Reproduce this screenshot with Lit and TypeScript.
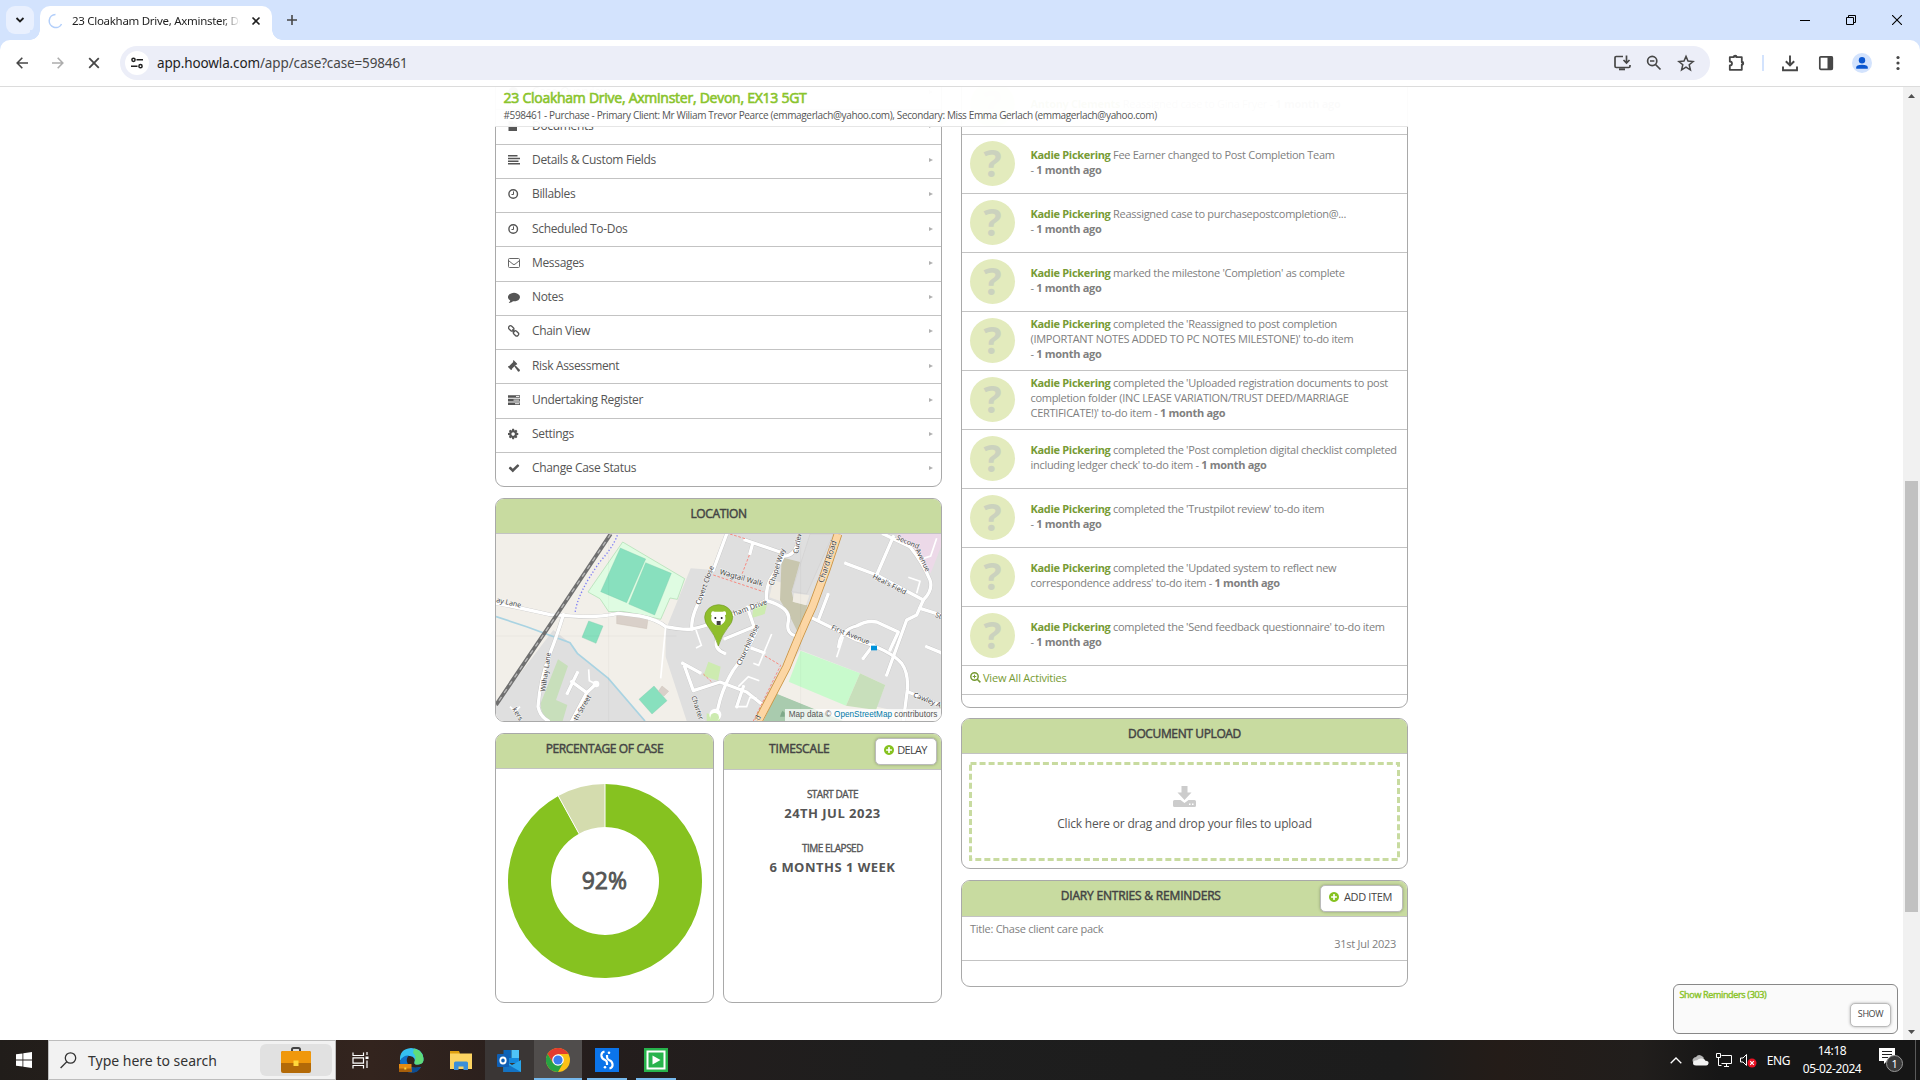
import { LitElement, html, css, svg } from "lit";
import { customElement } from "lit/decorators.js";

type Activity = { who: string; text: string; br?: boolean };

const ACTIVITIES: Activity[] = [
  { who: "Antony Clements", text: "Reassigned case to Gina Fryer" },
  { who: "Kadie Pickering", text: "Fee Earner changed to Post Completion Team", br: true },
  { who: "Kadie Pickering", text: "Reassigned case to purchasepostcompletion@...", br: true },
  { who: "Kadie Pickering", text: "marked the milestone 'Completion' as complete", br: true },
  { who: "Kadie Pickering", text: "completed the 'Reassigned to post completion|(IMPORTANT NOTES ADDED TO PC NOTES MILESTONE)' to-do item", br: true },
  { who: "Kadie Pickering", text: "completed the 'Uploaded registration documents to post|completion folder (INC LEASE VARIATION/TRUST DEED/MARRIAGE|CERTIFICATE!)' to-do item" },
  { who: "Kadie Pickering", text: "completed the 'Post completion digital checklist completed|including ledger check' to-do item" },
  { who: "Kadie Pickering", text: "completed the 'Trustpilot review' to-do item", br: true },
  { who: "Kadie Pickering", text: "completed the 'Updated system to reflect new|correspondence address' to-do item" },
  { who: "Kadie Pickering", text: "completed the 'Send feedback questionnaire' to-do item", br: true },
];

const PLUS = "M1344 960v-128q0-26-19-45t-45-19h-256v-256q0-26-19-45t-45-19h-128q-26 0-45 19t-19 45v256h-256q-26 0-45 19t-19 45v128q0 26 19 45t45 19h256v256q0 26 19 45t45 19h128q26 0 45-19t19-45v-256h256q26 0 45-19t19-45zm320-64q0 209-103 385.500t-279.500 279.500-385.500 103-385.500-103-279.500-279.500-103-385.500 103-385.500 279.500-279.500 385.500-103 385.500 103 279.500 279.500 103 385.500z";

const clock = svg`<svg class="ic" viewBox="0 0 12 12"><circle cx="5.200" cy="6" r="4.300" fill="none" stroke="#555" stroke-width="1.400"/><path d="M5.500 3.400V6.500H3.500" fill="none" stroke="#555" stroke-width="1"/></svg>`;

const MENU = [
  { label: "Case Overview", icon: svg`<svg class="ic" viewBox="0 0 12 12"><circle cx="5.200" cy="6" r="5" fill="#555"/></svg>` },
  { label: "Documents", icon: svg`<svg class="ic" viewBox="0 0 12 12"><path d="M.5 1h5v3.500H9V11H.5zM6.500 1L9 3.500H6.500z" fill="#555"/></svg>` },
  { label: "Details & Custom Fields", icon: svg`<svg class="ic" viewBox="0 0 12 12"><path d="M0 1h9.500v1.500H0zM0 3.700h12v1.500H0zM0 6.400h10.500v1.500H0zM0 9.100h12v1.500H0z" fill="#555"/></svg>` },
  { label: "Billables", icon: clock },
  { label: "Scheduled To-Dos", icon: clock },
  { label: "Messages", icon: svg`<svg class="ic" viewBox="0 0 12 12"><rect x=".5" y="1.500" width="11" height="9" rx="1" fill="none" stroke="#666"/><path d="M.8 3.800L5 7.200q1 .7 2 0l4.200-3.400" fill="none" stroke="#666"/></svg>` },
  { label: "Notes", icon: svg`<svg class="ic" viewBox="0 0 1792 1792"><path fill="#555" d="M1792 896q0 174-120 321.500t-326 233-450 85.500q-70 0-145-8-198 175-460 242-49 14-114 22-17 2-30.500-9t-17.500-29q-3-12 6-22l21-23q60-66 92-106t60-110l26-76q-157-89-247.500-220t-90.500-281q0-130 71-248.500t191-204.500 286-136.500 348-50.500q244 0 450 85.500t326 233 120 321.500z"/></svg>` },
  { label: "Chain View", icon: svg`<svg class="ic" viewBox="0 0 12 12"><g fill="none" stroke="#555" stroke-width="1.300"><rect x=".3" y="1.500" width="5.800" height="3.800" rx="1.800" transform="rotate(45 3.200 3.400)"/><rect x="5.100" y="6.500" width="5.800" height="3.800" rx="1.800" transform="rotate(45 8 8.400)"/><path d="M4.300 4.400l2.600 2.700"/></g></svg>` },
  { label: "Risk Assessment", icon: svg`<svg class="ic" viewBox="0 0 12 12"><g fill="#555"><path d="M5 .3l1 .2 3 3 .2 1-1.200.3-4 4-.3 1.200-1-.2-2.500-2.500L0 6.300l1.200-.3 4-4z"/><path d="M6.300 6.300L7.600 5.400l4.200 4.300q.4 1-.3 1.600t-1.500.2z"/></g></svg>` },
  { label: "Undertaking Register", icon: svg`<svg class="ic" viewBox="0 0 12 12"><path d="M0 1.200h12v2.600H0zM0 4.800h12v2.600H0zM0 8.400h12V11H0z" fill="#555"/><path d="M8 2.500h3.300M5.500 6.100h5.800M7 9.700h4.300" stroke="#fff" stroke-width=".9"/></svg>` },
  { label: "Settings", icon: svg`<svg class="ic" viewBox="130 0 1792 1792"><path fill="#555" d="M1152 896q0-106-75-181t-181-75-181 75-75 181 75 181 181 75 181-75 75-181zm512-109v222q0 12-8 23t-20 13l-185 28q-19 54-39 91 35 50 107 138 10 12 10 25t-9 23q-27 37-99 108t-94 71q-12 0-26-9l-138-108q-44 23-91 38-16 136-29 186-7 28-36 28h-222q-14 0-24.500-8.500t-11.500-21.500l-28-184q-49-16-90-37l-141 107q-10 9-25 9-14 0-25-11-126-114-165-168-7-10-7-23 0-12 8-23 15-21 51-66.500t54-70.500q-27-50-41-99l-183-27q-13-2-21-12.500t-8-23.500v-222q0-12 8-23t19-13l186-28q14-46 39-92-40-57-107-138-10-12-10-24 0-10 9-23 26-36 98.500-107.500t94.500-71.500q13 0 26 10l138 107q44-23 91-38 16-136 29-186 7-28 36-28h222q14 0 24.500 8.500t11.500 21.500l28 184q49 16 90 37l142-107q9-9 24-9 13 0 25 10 129 119 165 170 7 8 7 22 0 12-8 23-15 21-51 66.500t-54 70.500q26 50 41 98l183 28q13 2 21 12.500t8 23.500z"/></svg>` },
  { label: "Change Case Status", icon: svg`<svg class="ic" viewBox="0 0 1792 1792"><path fill="#555" d="M1671 566q0 40-28 68l-724 724-136 136q-28 28-68 28t-68-28l-136-136-362-362q-28-28-28-68t28-68l136-136q28-28 68-28t68 28l294 295 656-657q28-28 68-28t68 28l136 136q28 28 28 68z"/></svg>` },
];

const ROADS = [
  "M18 250L90 264L180 284L280 290Q340 290 385 280L450 288Q500 298 527 320Q580 330 605 327Q650 318 700 296L760 270L830 242",
  "M710 42L670 150M640 220Q600 290 606 327",
  "M220 284Q200 350 180 400Q150 480 144 560Q150 590 175 603",
  "M765 60L870 96M788 70L780 100M925 60Q915 110 880 108Q860 150 840 180Q826 210 830 242",
  "M830 242Q900 262 896 300Q885 340 918 348",
  "M772 262L792 320L705 356",
  "M680 360Q672 388 704 400",
  "M800 330Q770 400 730 450Q705 490 690 540L680 580",
  "M578 430L630 458M584 440L610 512L690 486L770 516L820 556",
  "M962 292L1100 360Q1200 390 1235 430Q1256 460 1252 510L1240 603",
  "M1014 224L985 300",
  "M1046 380Q1050 330 1100 318Q1130 300 1160 306L1225 336L1200 390",
  "M1067 130L1160 165L1210 50M1160 165L1300 240",
  "M1180 42L1260 80Q1300 130 1320 180Q1330 210 1300 240L1280 285L1250 300L1190 465",
  "M1290 265L1353 285M1310 380L1353 398M1150 375L1120 415M1255 516L1353 556",
  "M262 458L232 520M245 485L290 518L318 492M290 518L245 603",
  "M786 385L822 398M760 500L740 560",
];
const PATHS = [
  "M527 320L512 475", "M618 330L634 376L618 384", "M845 342L806 436L790 430M820 400L790 385",
  "M745 500L775 470L808 482M740 560L770 560L780 532L800 535", "M1340 55L1322 108L1300 115", "M1255 172L1290 184L1280 220",
  "M296 448L298 482L318 492", "M1060 350L1040 412", "M60 560L75 575L90 560",
];

@customElement("app-root")
export class AppRoot extends LitElement {
  static styles = css`
    :host { display: block; width: 1920px; height: 1080px; overflow: hidden; background: #fff; font-family: "Open Sans", "Noto Sans", sans-serif; color: #555; }
    * { box-sizing: border-box; }
    svg { display: block; flex: none; }
    .screen { display: grid; grid-template-rows: 40px 47px 953px 40px; height: 1080px; }

    .tabs { background: #d3e3fd; display: flex; font-family: "Noto Sans", "Open Sans", sans-serif; }
    .tabsearch { width: 28px; height: 28px; margin: 6px 6px 0; border-radius: 9px; background: #e9f0fe; display: grid; place-items: center; }
    .tab { width: 232px; height: 34px; margin-top: 6px; background: #fff; border-radius: 10px 10px 0 0; display: flex; align-items: center; padding: 0 9px 4px 8px; position: relative; }
    .flare { position: absolute; bottom: 0; width: 10px; height: 10px; }
    .flare.l { left: -10px; background: radial-gradient(circle at 0 0, #d3e3fd 9.500px, #fff 10px); }
    .flare.r { right: -10px; background: radial-gradient(circle at 100% 0, #d3e3fd 9.500px, #fff 10px); }
    .tabtitle { margin-left: 10px; width: 169px; font-size: 11.500px; letter-spacing: -0.290px; line-height: 18px; color: #1f1f1f; overflow: hidden; white-space: nowrap; -webkit-mask: linear-gradient(90deg, #000 150px, transparent 168px); }
    .tabclose { margin-left: 10px; }
    .newtab { margin: 14px 0 0 14px; }
    .wbtns { margin-left: auto; display: flex; padding: 15px 18px 0 0; gap: 36px; }

    .bar { background: #d3e3fd; }
    .barin { background: #fff; height: 47px; border-radius: 10px 10px 0 0; border-bottom: 1px solid #dcdcdc; display: flex; align-items: center; padding: 0 16px 1px; }
    .nav { display: flex; gap: 24px; align-items: center; width: 104px; }
    .omni { width: 1590px; height: 34px; border-radius: 17px; background: #eceef8; display: flex; align-items: center; padding: 0 15px 0 5px; }
    .site { width: 24px; height: 24px; border-radius: 50%; background: #fff; display: grid; place-items: center; }
    .url { margin-left: 8px; font-size: 13.500px; letter-spacing: -0.130px; line-height: 20px; color: #474747; font-family: "Noto Sans", "Open Sans", sans-serif; }
    .url b { font-weight: 400; color: #1f1f1f; }
    .omniicons { margin-left: auto; display: flex; gap: 14px; }
    .ext { display: flex; align-items: center; margin-left: 17px; }
    .sep { width: 2px; height: 16px; background: #d3e3fd; margin: 0 17px 0 15px; }
    .panel { margin-left: 19px; }
    .me { width: 20px; height: 20px; border-radius: 50%; background: #d3e3fd; margin: 0 24px 0 18px; overflow: hidden; }

    .page { position: relative; overflow: hidden; display: flex; justify-content: space-between; }
    .cols { display: grid; grid-template-columns: 447px 447px; column-gap: 19px; margin-left: 495px; align-items: start; }
    .card { border: 1px solid #a9a9a9; border-radius: 9px; overflow: hidden; background: #fff; }
    .hd { background: #c8dba0; border-bottom: 1px solid #c3c3c3; height: 35px; display: flex; justify-content: center; padding-top: 6px; font-size: 12px; line-height: 18px; -webkit-text-stroke: 0.450px #444; color: #444; letter-spacing: -0.370px; }
    .left { margin-top: -11.900px; }
    .row { height: 34.250px; border-bottom: 1px solid #c3c3c3; display: flex; align-items: center; padding: 0 8.500px 2px 12px; font-size: 12px; letter-spacing: -0.330px; }
    .row:last-child { height: 33.250px; border-bottom: 0; }
    .ic { width: 12px; height: 12px; }
    .row span { margin-left: 12px; line-height: 18px; }
    .arr { margin-left: auto; width: 0; height: 0; border: 2px solid transparent; border-left: 4px solid #b0b0b0; border-right: 0; }
    .loc { margin-top: 10.900px; height: 224px; }
    .pair { display: grid; grid-template-columns: 219px 219px; gap: 9px; margin-top: 11px; }
    .pair .card { height: 270px; }
    .donut { margin: 15px 0 0 12.300px; position: relative; width: 194px; height: 194px; }
    .pct { position: absolute; inset: 0; display: grid; place-items: center; font-size: 23px; -webkit-text-stroke: 0.800px #555; padding: 0 2px 2px 0; }
    .hdb { height: 36px; padding: 0 4.500px 0 0; justify-content: flex-end; align-items: flex-start; letter-spacing: -0.190px; }
    .hdb .tt { flex: 1; text-align: center; padding-top: 6px; }
    .btn { background: #fff; border: 1px solid #bbb; border-radius: 5px; box-shadow: 0 0 3px rgba(0,0,0,.3); -webkit-text-stroke: 0; font-size: 11px; color: #444; display: flex; align-items: center; justify-content: center; margin-top: 4px; height: 27px; padding-bottom: 3px; }
    .btn svg { width: 10px; height: 10px; fill: #86c220; }
    .delay { width: 62px; gap: 3px; letter-spacing: -0.700px; }
    .add { width: 83px; gap: 5px; letter-spacing: -0.360px; padding-right: 1px; }
    .ts { text-align: center; padding-top: 16px; }
    .k { font-size: 10px; line-height: 16px; -webkit-text-stroke: 0.350px #555; letter-spacing: -0.500px; }
    .v { font-size: 13px; line-height: 20px; font-weight: 700; padding-top: 0.500px; margin-bottom: 17.500px; letter-spacing: 0.480px; }

    .right { margin-top: -12px; }
    .act { height: 59px; border-bottom: 1px solid #c3c3c3; display: flex; align-items: center; padding-left: 8px; font-size: 11px; line-height: 15px; letter-spacing: -0.295px; color: #808080; white-space: nowrap; }
    .act b { font-weight: 700; letter-spacing: -0.310px; }
    .act .who { color: #779b35; }
    .txt { padding-bottom: 4px; }
    .txt.tall { padding-bottom: 6px; }
    .av { width: 45px; height: 45px; border-radius: 50%; background: #e3ebbd; color: #cbd2be; font-size: 38px; font-weight: 700; line-height: 42px; text-align: center; margin: 0 15.500px 1px 0; flex: none; }
    .all { height: 29px; border-bottom: 1px solid #c3c3c3; display: flex; align-items: center; gap: 2px; padding: 0 0 5px 8px; font-size: 11px; letter-spacing: -0.210px; color: #779b35; }
    .allend { height: 12px; }
    .up { margin-top: 10px; height: 151px; }
    .dash { margin: 8px 7px 0; height: 99px; display: flex; flex-direction: column; align-items: center; position: relative; font-size: 12px; letter-spacing: -0.190px; line-height: 18px; padding-top: 24px; color: #555; }
    .dash .frame { position: absolute; inset: 0; }
    .dash .dl { margin-bottom: 8px; }
    .diary { margin-top: 11px; height: 107px; }
    .entry { height: 44px; border-bottom: 1px solid #c3c3c3; padding: 4px 11px 0 8px; font-size: 11px; line-height: 15px; letter-spacing: -0.260px; color: #808080; }
    .entry .d { text-align: right; }

    .sticky { position: absolute; left: 495px; top: 0; width: 913px; height: 40px; background: rgba(255,255,255,.97); border-bottom: 1px solid #e6e6e6; padding-left: 8.500px; }
    .h1 { font-size: 14px; line-height: 21px; -webkit-text-stroke: 0.600px #8ac42c; color: #8ac42c; letter-spacing: -0.255px; }
    .sub { font-size: 10px; line-height: 14px; color: #555; letter-spacing: -0.358px; }
    .scroll { width: 17px; background: #f1f1f1; display: flex; flex-direction: column; align-items: center; }
    .scroll svg { margin-top: 7px; }
    .thumb { width: 13px; height: 431px; background: #c1c1c1; margin-top: 383px; }
    .scroll .dn { margin: auto 0 6px; }
    .rem { position: absolute; left: 1673px; top: 897px; width: 225px; height: 50px; border: 1px solid #888; border-radius: 6px; background: #fafafa; padding: 3px 6px 3px 5.500px; }
    .remt { font-size: 9px; line-height: 14px; -webkit-text-stroke: 0.400px #8ac42c; color: #8ac42c; letter-spacing: -0.330px; }
    .show { width: 41px; height: 24px; margin: 1px 0 0 auto; font-size: 9px; letter-spacing: -0.400px; }

    .task { background: linear-gradient(90deg, #211d1a 0, #33241e 370px, #241d1c 600px, #1e1e1e 900px, #1c1c1c 1400px, #241c18 1500px, #211e1c 1640px, #161616 1720px); display: flex; font-family: "Noto Sans", "Open Sans", sans-serif; }
    .start { width: 48px; display: grid; place-items: center; }
    .search { width: 288px; background: #f2f2f2; border: 1px solid #bdbdbd; display: flex; align-items: center; padding: 0 3px 0 11px; font-size: 14px; color: #333; }
    .search span { margin-left: 11px; }
    .brief { margin-left: auto; width: 72px; height: 32px; border-radius: 6px; background: #e1e1e1; display: grid; place-items: center; }
    .app { width: 49px; height: 40px; display: grid; place-items: center; border-bottom: 2px solid transparent; padding-top: 2px; }
    .tv { width: 51px; padding-right: 2px; }
    .on1 { background: #3a3635; padding-right: 1px; }
    .on2 { width: 48px; background: #504d4c; border-bottom-color: #76b9ed; }
    .on3 { width: 40px; margin-left: 5px; border-bottom-color: #76b9ed; }
    .on3 + .on3 { margin-left: 9px; }
    .tray { margin-left: auto; display: flex; align-items: center; color: #fff; font-size: 12px; letter-spacing: -0.400px; }
    .cloud { margin-left: 10px; }
    .net, .vol { margin-left: 7px; }
    .clk { width: 72px; text-align: center; line-height: 18px; margin-left: 6px; }
    .eng { margin-left: 10px; }
    .noti { margin-left: 11px; }
    .peek { width: 1px; height: 40px; background: #5a5a5a; margin: 0 4px 0 10px; }
  `;

  private btn(cls: string, label: string) {
    return html`<div class="btn ${cls}"><svg viewBox="128 128 1536 1536"><path d=${PLUS} /></svg><span>${label}</span></div>`;
  }

  private map() {
    const label = (x: number, y: number, r: number, t: string, s = 21) =>
      svg`<text x=${x} y=${y} transform="rotate(${r} ${x} ${y})" font-size=${s} fill="#444" stroke="#fff" stroke-width="3" paint-order="stroke" stroke-opacity=".7">${t}</text>`;
    return html`<svg width="445" height="187" viewBox="18 42 1335 561" preserveAspectRatio="none" font-family="Noto Sans, Open Sans, sans-serif">
      <rect x="18" y="42" width="1335" height="561" fill="#f2efe9"/>
      <path d="M710 42L670 150L602 145L527 330L527 410L590 603H800L930 390L1110 460L1186 495L1160 560L1353 603V42Z" fill="#dfdfdf"/>
      <path d="M18 603V555L190 330L240 368L262 400L355 475L465 603Z" fill="#dfdfdf"/>
      <path d="M850 180L880 190L876 245L838 232Z" fill="#f0ece4"/>
      <path d="M875 112L930 126L905 215L912 246L952 256L930 350L905 300L870 240Z" fill="#c8c6ae"/>
      <path d="M960 42L905 215L950 222L1030 42Z" fill="#dcdcdc" stroke="#c9c4c4"/>
      <path d="M912 220L958 226L948 256L908 245Z" fill="#f0ece4"/>
      <path d="M1220 42H1353V80L1322 160Q1290 100 1220 60Z" fill="#ecd9e8"/>
      <path d="M860 520L1020 585L1060 603H820Z" fill="#a9cbae"/><path d="M900 487L1070 557L1060 603L980 570L862 522Z" fill="#f2efe9"/>
      <path d="M932 392L1110 460L1068 557L896 485Z" fill="#c8facc"/>
      <path d="M1110 460L1186 495L1158 570L1068 557Z" fill="#c8dfbb"/>
      <path d="M398 66L584 176L562 238L540 234L512 298L440 282Q400 270 356 275L330 236L294 216Z" fill="#dffce2" stroke="#a9dcae" stroke-width="2"/>
      <path d="M391 84L467 117L410 248L332 215ZM467 128L544 160L494 285L416 252Z" fill="#88e0be" stroke="#7cc9a9"/>
      <path d="M296 303L339 318L318 370L276 352ZM492 498L531 542L486 582L447 538Z" fill="#88e0be" stroke="#7cc9a9"/>
      <path d="M380 282L474 296L470 326L380 311ZM516 498L536 514L522 528L505 514Z" fill="#d9d0c9" stroke="#c6b8ae"/>
      <path d="M204 418L234 438L198 540L232 555L218 603H178Q150 580 152 550Z" fill="#c8dfbb"/>
      <path d="M790 262L832 250L824 282L786 294ZM655 425L692 440L684 482L640 468ZM650 603V580L690 590V603Z" fill="#cdebb0"/>
      <path d="M18 290L110 320L240 368L262 400L355 475L465 603" fill="none" stroke="#a9d3e2" stroke-width="5"/>
      ${ROADS.map((d) => svg`<path d=${d} fill="none" stroke="#c4c4c4" stroke-width="12" stroke-linejoin="round"/>`)}
      ${PATHS.map((d) => svg`<path d=${d} fill="none" stroke="#fff" stroke-width="5"/>`)}
      ${ROADS.map((d) => svg`<path d=${d} fill="none" stroke="#fff" stroke-width="10" stroke-linejoin="round" stroke-linecap="round"/>`)}
      <circle cx="318" cy="492" r="10" fill="#fff"/><circle cx="676" cy="584" r="18" fill="#fff"/><circle cx="674" cy="592" r="13" fill="#cdebb0"/>
      <path d="M720 42L765 56M778 105L755 165M670 165L820 215M825 408L872 436L790 603M640 462L664 485" fill="none" stroke="#f88a80" stroke-width="3" stroke-dasharray="8 5"/>
      <path d="M382 46Q370 80 330 125Q262 220 255 280" fill="none" stroke="#7d7df5" stroke-width="4" stroke-dasharray="4 6"/>
      <path d="M362 42L290 150L200 285L18 555" fill="none" stroke="#707070" stroke-width="12"/>
      <path d="M362 42L290 150L200 285L18 555" fill="none" stroke="#b9b9b9" stroke-width="4" stroke-dasharray="14 14"/>
      <path d="M1044 42Q1010 150 968 258Q930 340 890 440L805 603" fill="none" stroke="#c99444" stroke-width="26"/>
      <path d="M1044 42Q1010 150 968 258Q930 340 890 440L805 603" fill="none" stroke="#fcd6a4" stroke-width="21"/>
      <path d="M356 42V603M932 42V603M18 348H560" stroke="#000" stroke-opacity=".05" stroke-width="2"/>
      ${label(18, 246, 13, "ay Lane")}
      ${label(166, 516, -82, "Wilhay Lane")}
      ${label(262, 603, -60, "th Street")}
      ${label(66, 568, 58, "kers")}
      ${label(630, 256, -70, "Covert Close")}
      ${label(688, 162, 16, "Wagtail Walk", 22)}
      ${label(850, 198, -72, "Chapel Way")}
      ${label(924, 102, -80, "Curlew")}
      ${label(733, 288, -20, "ham Drive", 22)}
      ${label(752, 438, -65, "Churchill Rise")}
      ${label(604, 530, 72, "Charter R")}
      ${label(1000, 190, -72, "Chard Road", 24)}
      ${label(808, 602, -65, "d", 22)}
      ${label(1022, 328, 22, "First Avenue")}
      ${label(1146, 174, 27, "Heal's Field")}
      ${label(1218, 58, 24, "Second")}
      ${label(1276, 90, 64, "Avenue")}
      ${label(1334, 290, 20, "St")}
      ${label(1268, 530, 22, "Cawley Av")}
      <rect x="1143" y="377" width="18" height="14" fill="#0092da"/>
      <path d="M685 378Q675 345 656 322Q644 308 644 292A42 38 0 0 1 728 292Q728 308 714 322Q695 345 685 378Z" fill="#8fbe2c" stroke="#729c22" stroke-width="2"/>
      <path d="M664 278q2-6 10-3h24q8-3 10 3t-3 8q4 16-4 22q-6 8-16 8t-16-8q-8-6-4-22q-4-2-1-8z" fill="#fff"/>
      <circle cx="676" cy="294" r="3" fill="#222"/><circle cx="695" cy="294" r="3" fill="#222"/><path d="M680 303h12v12h-12z" fill="#444"/>
      <path d="M885 567H1353V603H885Z" fill="#fff" fill-opacity=".75"/>
      <path d="M870 590h14v-12l-6-6-4 6z" fill="#7fa98a"/>
      <g font-family="Liberation Sans, Arial, sans-serif" font-size="24.500">
        <text x="896" y="591" fill="#555" textLength="128">Map data ©</text>
        <text x="1032" y="591" fill="#0078a8" textLength="174">OpenStreetMap</text>
        <text x="1213" y="591" fill="#555" textLength="129">contributors</text>
      </g>
    </svg>`;
  }

  private donut() {
    const p = (r: number) => {
      const a = (-28.800 * Math.PI) / 180;
      return `${97 + r * Math.sin(a)} ${97 - r * Math.cos(a)}`;
    };
    return html`<div class="donut"><svg width="194" height="194" viewBox="0 0 194 194">
      <path d="M97 0A97 97 0 1 1 ${p(97)}L${p(54)}A54 54 0 1 0 97 43Z" fill="#86c220"/>
      <path d="M${p(97)}A97 97 0 0 1 97 0V43A54 54 0 0 0 ${p(54)}Z" fill="#d4dcae"/>
      <path d="M97 0V43M${p(97)}L${p(54)}" stroke="#fff" stroke-width="1"/>
    </svg><div class="pct"><span>92%</span></div></div>`;
  }

  private activity(a: Activity) {
    const lines = a.text.split("|");
    const tall = lines.length + (a.br ? 1 : 0) > 2;
    return html`<div class="act"><div class="av">?</div><div class="txt ${tall ? "tall" : ""}"><b class="who">${a.who}</b> ${lines.map((l, i) => html`${i ? html`<br />` : ""}${l}`)}${a.br ? html`<br />` : " "}- <b>1 month ago</b></div></div>`;
  }

  private chrome() {
    return html`
      <div class="tabs">
        <div class="tabsearch"><svg width="10" height="8" viewBox="0 0 10 8"><path d="M1.500 2L5 5.500 8.500 2" fill="none" stroke="#1f1f1f" stroke-width="1.800"/></svg></div>
        <div class="tab"><i class="flare l"></i><i class="flare r"></i>
          <svg width="14" height="16" viewBox="0 0 14 16"><path d="M7.500 1.500A6.500 6.500 0 1 0 13.500 11" fill="none" stroke="#b3cffa" stroke-width="1.500"/></svg>
          <div class="tabtitle">23 Cloakham Drive, Axminster, Devon</div>
          <svg class="tabclose" width="10" height="10" viewBox="0 0 10 10"><path d="M1.500 1.500l7 7M8.500 1.500l-7 7" stroke="#1f1f1f" stroke-width="1.600"/></svg>
        </div>
        <svg class="newtab" width="12" height="12" viewBox="0 0 12 12"><path d="M6 1v10M1 6h10" stroke="#474747" stroke-width="1.600"/></svg>
        <div class="wbtns">
          <svg width="10" height="10" viewBox="0 0 10 10"><path d="M0 5.500h10" stroke="#000"/></svg>
          <svg width="10" height="10" viewBox="0 0 10 10"><path d="M.5 2.500h7v7h-7zM2.500 2.500v-2h7v7h-2" fill="none" stroke="#000"/></svg>
          <svg width="10" height="10" viewBox="0 0 10 10"><path d="M0 0l10 10M10 0L0 10" stroke="#000" stroke-width="1.100"/></svg>
        </div>
      </div>
      <div class="bar"><div class="barin">
        <div class="nav">
          <svg width="12" height="12" viewBox="0 0 12 12"><path d="M12 6H1.500M6.300.8L1.200 6l5.100 5.200" fill="none" stroke="#474747" stroke-width="1.600"/></svg>
          <svg width="12" height="12" viewBox="0 0 12 12"><path d="M0 6h10.500M5.700.8L10.800 6l-5.100 5.200" fill="none" stroke="#adadad" stroke-width="1.600"/></svg>
          <svg width="12" height="12" viewBox="0 0 12 12"><path d="M1.200 1.200l9.600 9.600M10.800 1.200l-9.600 9.600" stroke="#474747" stroke-width="1.800"/></svg>
        </div>
        <div class="omni">
          <div class="site"><svg width="12" height="12" viewBox="0 0 12 12" fill="none" stroke="#1f1f1f" stroke-width="1.500"><circle cx="2.500" cy="2.800" r="1.600"/><path d="M5.500 2.800H12M0 9.200h6.500"/><circle cx="9.500" cy="9.200" r="1.600"/></svg></div>
          <div class="url"><b>app.hoowla.com</b>/app/case?case=598461</div>
          <div class="omniicons">
            <svg width="18" height="18" viewBox="0 0 18 18" fill="none" stroke="#474747" stroke-width="1.700"><path d="M10 2.500H3.200q-1.200 0-1.200 1.200v8.600q0 1.200 1.200 1.200h12.600q1.200 0 1.200-1.200V11M13.500 1.500v7M10.500 6l3 3 3-3"/><path d="M6 15.300h6" stroke-width="2"/></svg>
            <svg width="18" height="18" viewBox="0 0 18 18" fill="none" stroke="#474747" stroke-width="1.700"><circle cx="7.200" cy="7" r="4.600"/><path d="M10.500 10.500l5 5M5 7h4.400"/></svg>
            <svg width="18" height="18" viewBox="0 0 18 18" fill="none" stroke="#474747" stroke-width="1.500"><path d="M9 2.400l2 4.700 5.100.4-3.900 3.300 1.200 5L9 13.100l-4.400 2.700 1.200-5L1.900 7.500 7 7.100z"/></svg>
          </div>
        </div>
        <div class="ext">
          <svg width="20" height="20" viewBox="0 0 20 20"><path d="M2.800 4.200h3.800v-.5h3v.5h5.200v5h.7v2.400h-.7v5.200H2.800v-4.300q2.200 0 2.200-2t-2.200-2z" fill="none" stroke="#474747" stroke-width="1.800" stroke-linejoin="round"/><path d="M6 4a2.200 2.200 0 0 1 4.400 0zM15 8a2.200 2.200 0 0 1 0 4.400z" fill="#474747"/></svg>
          <div class="sep"></div>
          <svg width="18" height="18" viewBox="0 0 18 18" fill="none" stroke="#474747" stroke-width="1.900"><path d="M9 1.500v9.500M4.800 7.200L9 11.300l4.200-4.100M2 12.500v3.800h14v-3.800"/></svg>
          <svg class="panel" width="16" height="16" viewBox="0 0 16 16"><rect x="1.800" y="1.800" width="12.500" height="12.500" rx="1" fill="none" stroke="#474747" stroke-width="1.700"/><path d="M9.500 1.500h5v13h-5z" fill="#474747"/></svg>
          <svg class="me" viewBox="0 0 20 20"><circle cx="10" cy="7.200" r="3.200" fill="#0b57d0"/><path d="M4.200 15.800v-1.300q0-2.700 5.800-2.700t5.800 2.700v1.300z" fill="#0b57d0"/></svg>
          <svg width="4" height="16" viewBox="0 0 4 16" fill="#474747"><circle cx="2" cy="2.500" r="1.600"/><circle cx="2" cy="8" r="1.600"/><circle cx="2" cy="13.500" r="1.600"/></svg>
        </div>
      </div></div>`;
  }

  private taskbar() {
    return html`<div class="task">
      <div class="start"><svg width="16" height="16" viewBox="0 0 16 16" fill="#fff"><path d="M0 2.300L6.500 1.400V7.600H0zM7.300 1.300L16 0V7.600H7.300zM0 8.400h6.500v6.200L0 13.700zM7.300 8.400H16V16l-8.700-1.300z"/></svg></div>
      <div class="search"><svg width="17" height="17" viewBox="0 0 17 17" fill="none" stroke="#333" stroke-width="1.300"><circle cx="10.500" cy="6" r="5.200"/><path d="M6.800 9.800L.6 16"/></svg><span>Type here to search</span>
        <div class="brief"><svg width="30" height="26" viewBox="0 0 30 26"><path d="M11 5V2.500Q11 1 12.500 1h5Q19 1 19 2.500V5" fill="none" stroke="#444" stroke-width="2"/><rect y="4" width="30" height="22" rx="2" fill="#b36a08"/><path d="M0 6q0-2 2-2h26q2 0 2 2v10H0z" fill="#f0980c"/><rect x="12.500" y="13.500" width="5" height="5.500" fill="#ffd83b"/></svg></div></div>
      <div class="app tv"><svg width="17" height="17" viewBox="0 0 17 17" fill="none" stroke="#fff" stroke-width="1.200"><path d="M1 .5V3.500H11.500V.5M1 16.500v-3H11.500v3M1 5.800H11.500v5.400H1zM15 0v3M15 8.500V16"/><path d="M13.500 4.500h3v2.500h-3z" fill="#fff" stroke="none"/></svg></div>
      <div class="app"><svg width="25" height="25" viewBox="0 0 25 25">
        <path d="M1 13Q0 1 12 0q11 0 12.500 10Q25 16 19 16.500q-4 .3-3.500-2Q17 9 11 8 4 7.500 1 13z" fill="#35c1f1"/>
        <path d="M15 .5q9 2 9.500 10.500Q25 16 19 16.500q-4 .3-3.500-2Q18 8 14 5z" fill="#5fdc7a"/>
        <path d="M1 13q3-6 9-5.500Q7 10 8 14q2 8 14 5-3 5.500-10 5.500Q1 24 1 13z" fill="#1070c8"/>
        <path d="M8 14q2 8 14 5-3 5.500-8 5.500-6-3-6-10.500z" fill="#0c4c92"/>
        <path d="M0 16h12.500v8H0z" fill="#e58b12"/><path d="M0 20.500h12.500V24H0z" fill="#a8600b"/><path d="M5.300 19.500h2v2h-2z" fill="#ffd23b"/></svg></div>
      <div class="app"><svg width="22" height="19" viewBox="0 0 22 19"><path d="M0 1h8l2 1.500h12V18H0z" fill="#fcd462"/><path d="M0 0h9l1 2.500H0z" fill="#dfa010"/><path d="M4 19v-7q0-1.500 1.500-1.500h11Q18 10.500 18 12v7h-4.500v-3.500h-5V19z" fill="#3c8fd8"/></svg></div>
      <div class="app on1"><svg width="24" height="23" viewBox="0 0 24 23"><path d="M6.500 1h8v8h-8z" fill="#0a64b8"/><path d="M14.500 1H22v8h-7.500z" fill="#4fc3f7"/><path d="M6.500 9H22v5H6.500z" fill="#1488dc"/><path d="M6.500 10l8.500 6 9-5v12H6.500z" fill="#2aa5ea"/><path d="M6.500 13l17.500 10H6.500z" fill="#1373c4"/><rect y="5" width="12" height="13" rx="1" fill="#0f5fb4"/><ellipse cx="6" cy="11.500" rx="2.700" ry="3" fill="none" stroke="#fff" stroke-width="1.800"/></svg></div>
      <div class="app on2"><svg width="24" height="24" viewBox="0 0 24 24"><circle cx="12" cy="12" r="12" fill="#fbc116"/><path d="M1.600 6A12 12 0 0 1 22.400 6H12L7 15z" fill="#e33b2e"/><path d="M1.600 6A12 12 0 0 0 12 24l5.200-9H7z" fill="#27a243"/><circle cx="12" cy="12" r="5.800" fill="#fff"/><circle cx="12" cy="12" r="4.600" fill="#3b7ded"/></svg></div>
      <div class="app on3"><svg width="24" height="24" viewBox="0 0 24 24"><path d="M0 0h24v24H0z" fill="#0b74ea"/><path d="M9.500 3.500Q6 4.500 6.500 8q.5 3 3.500 4 2 .8 2 3v2M14.500 20.500q3.500-1 3-4.500-.5-3-3.500-4-2-.8-2-3V7" fill="none" stroke="#fff" stroke-width="2.200"/><circle cx="14" cy="4.700" r="1.300" fill="#fff"/><circle cx="10" cy="19.300" r="1.300" fill="#fff"/></svg></div>
      <div class="app on3"><svg width="24" height="24" viewBox="0 0 24 24"><path d="M0 0h24v24H0z" fill="#27b34c"/><path d="M3.500 3.500h17v17h-17z" fill="none" stroke="#fff" stroke-width="2"/><path d="M8.500 7.500l8 4.500-8 4.500z" fill="#fff"/></svg></div>
      <div class="tray">
        <svg width="12" height="7" viewBox="0 0 12 7"><path d="M.7 6.300L6 1l5.300 5.300" fill="none" stroke="#fff" stroke-width="1.300"/></svg>
        <svg class="cloud" width="17" height="12" viewBox="0 0 17 12"><path d="M1 8a4 3.500 0 0 1 3-5Q6 0 9 1.500t3 3L4 9z" fill="#b5b5b5"/><path d="M4 11.500q-3 0-3-2.500t4-2.800Q7 4 10 4.500t3.500 2.300Q17 7 16.500 9.500t-3 2z" fill="#f2f2f2"/></svg>
        <svg class="net" width="17" height="14" viewBox="0 0 17 14" fill="none" stroke="#fff"><path d="M5.500 2.500h10v8h-10M8 13.500h5M10.500 10.500v3M.5.500h4v4h-4zM2.500 4.500v8h3"/></svg>
        <svg class="vol" width="17" height="15" viewBox="0 0 17 15"><path d="M.5 5h2.500L6.500 1.500v11L3 9H.5z" fill="none" stroke="#fff"/><circle cx="12" cy="10" r="4.500" fill="#e81123"/><path d="M10.200 8.200l3.600 3.600M13.800 8.200l-3.600 3.600" stroke="#fff" stroke-width="1.200"/></svg>
        <span class="eng">ENG</span>
        <div class="clk"><div>14:18</div><div>05-02-2024</div></div>
        <svg class="noti" width="26" height="26" viewBox="0 0 26 26"><path d="M0 1h16v13H8l-3 3v-3H0z" fill="#fff"/><path d="M3 4.500h10M3 7.500h10M3 10.500h6" stroke="#222"/><circle cx="15.500" cy="16.500" r="8" fill="#3a3a3a" stroke="#999"/><text x="12.600" y="20.500" fill="#fff" font-size="11">1</text></svg>
        <div class="peek"></div>
      </div>
    </div>`;
  }

  render() {
    return html`<div class="screen">
      ${this.chrome()}
      <div class="page">
        <div class="cols">
          <div class="left">
            <div class="card">${MENU.map((m) => html`<div class="row">${m.icon}<span>${m.label}</span><i class="arr"></i></div>`)}</div>
            <div class="card loc"><div class="hd">LOCATION</div>${this.map()}</div>
            <div class="pair">
              <div class="card"><div class="hd">PERCENTAGE OF CASE</div>${this.donut()}</div>
              <div class="card"><div class="hd hdb"><div class="tt">TIMESCALE</div>${this.btn("delay", "DELAY")}</div>
                <div class="ts"><div class="k">START DATE</div><div class="v">24TH JUL 2023</div><div class="k">TIME ELAPSED</div><div class="v">6 MONTHS 1 WEEK</div></div>
              </div>
            </div>
          </div>
          <div class="right">
            <div class="card">
              ${ACTIVITIES.map((a) => this.activity(a))}
              <div class="all"><svg width="11" height="11" viewBox="0 0 11 11" fill="none" stroke="#779b35" stroke-width="1.500"><circle cx="4.500" cy="4.500" r="3.700"/><path d="M7.200 7.200l3.200 3.200"/><path d="M2.700 4.500h3.600M4.500 2.700v3.600" stroke-width="1"/></svg><span>View All Activities</span></div>
              <div class="allend"></div>
            </div>
            <div class="card up"><div class="hd">DOCUMENT UPLOAD</div>
              <div class="dash"><svg class="frame" width="431" height="99"><rect x="1.500" y="1.500" width="428" height="96" fill="none" stroke="#c8dba0" stroke-width="3" stroke-dasharray="6 3.050"/></svg>
                <svg class="dl" width="23" height="21" viewBox="0 0 23 21"><path d="M8.500 0h6v6.500h4L11.500 14 4.500 6.500h4z" fill="#ccc"/><path d="M1.500 14h6l4 3 4-3h6q1.500 0 1.500 1.500v4q0 1.500-1.500 1.500h-20Q0 21 0 19.500v-4Q0 14 1.500 14z" fill="#ccc"/><path d="M16 17.500h1.500v1.500H16zM19 17.500h1.500v1.500H19z" fill="#fff"/></svg>
                <span>Click here or drag and drop your files to upload</span></div>
            </div>
            <div class="card diary"><div class="hd hdb"><div class="tt">DIARY ENTRIES &amp; REMINDERS</div>${this.btn("add", "ADD ITEM")}</div>
              <div class="entry"><div>Title: Chase client care pack</div><div class="d">31st Jul 2023</div></div>
            </div>
          </div>
        </div>
        <div class="sticky"><div class="h1">23 Cloakham Drive, Axminster, Devon, EX13 5GT</div><div class="sub">#598461 - Purchase - Primary Client: Mr Wiliam Trevor Pearce (emmagerlach@yahoo.com), Secondary: Miss Emma Gerlach (emmagerlach@yahoo.com)</div></div>
        <div class="scroll"><svg width="7" height="4" viewBox="0 0 7 4"><path d="M0 4L3.500 0 7 4z" fill="#505050"/></svg><div class="thumb"></div><svg class="dn" width="7" height="4" viewBox="0 0 7 4"><path d="M0 0L3.500 4 7 0z" fill="#505050"/></svg></div>
        <div class="rem"><div class="remt">Show Reminders (303)</div><div class="btn show">SHOW</div></div>
      </div>
      ${this.taskbar()}
    </div>`;
  }
}
